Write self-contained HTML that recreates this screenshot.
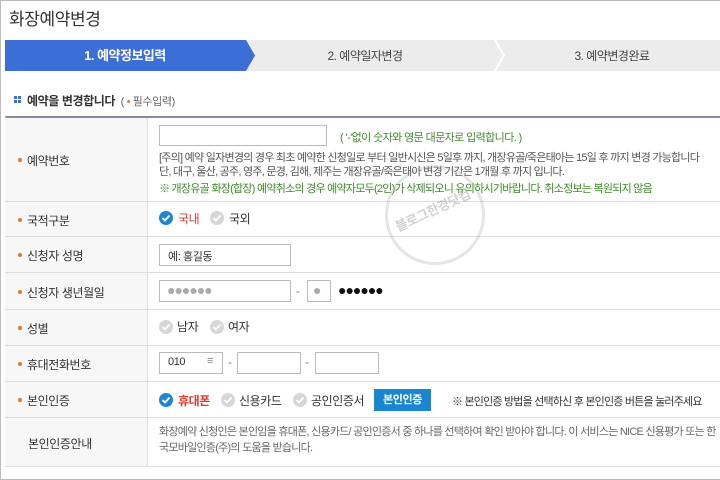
<!DOCTYPE html>
<html><head><meta charset="utf-8"><style>
*{margin:0;padding:0;box-sizing:border-box}
body{width:720px;height:480px;background:#fff;font-family:"Liberation Sans","Noto Sans CJK KR",sans-serif;position:relative;overflow:hidden;color:#333;letter-spacing:-0.4px}
.frame{position:absolute;left:0;top:0;width:720px;height:480px;border:1px solid #bbb;border-right:none}
.abs{position:absolute}
.t{font-size:12px;white-space:nowrap}
.row{position:absolute;left:5px;width:715px;border-bottom:1px solid #ddd}
.lab{position:absolute;left:5px;width:143px;background:#f7f7f7;border-right:1px solid #ddd}
.lab span{position:absolute;left:22px;font-size:12px;color:#333}
.dot{position:absolute;left:13px;width:4px;height:4px;border-radius:2px;background:#e8761f}
.box{position:absolute;border:1px solid #bbb;background:#fff;height:22px}
.chk{position:absolute;width:14px;height:14px;border-radius:7px;background:#d6d6d6}
.chk.on{background:#1f86d6}
.chk svg{position:absolute;left:2px;top:2px}
.clip{position:absolute;left:148px;top:0;width:572px;height:480px;overflow:hidden}
</style></head><body>
<div class="frame"></div>
<div class="abs" style="left:9px;top:5px;font-size:17px;color:#333">화장예약변경</div>
<svg class="abs" style="left:5px;top:40px" width="715" height="31">
<polygon points="0,0 715,0 715,31 0,31" fill="#ececec"/>
<polygon points="0,0 241,0 250,15.5 241,31 0,31" fill="#3b6fd6"/>
<polyline points="490,0 499,15.5 490,31" fill="none" stroke="#fff" stroke-width="2"/>
<text x="120" y="20" font-size="13" fill="#fff" text-anchor="middle" font-weight="bold" letter-spacing="-0.5" font-family="Liberation Sans,Noto Sans CJK KR,sans-serif">1. 예약정보입력</text>
<text x="360" y="20" font-size="12" fill="#444" text-anchor="middle" letter-spacing="-0.5" font-family="Liberation Sans,Noto Sans CJK KR,sans-serif">2. 예약일자변경</text>
<text x="607" y="20" font-size="12" fill="#444" text-anchor="middle" letter-spacing="-0.5" font-family="Liberation Sans,Noto Sans CJK KR,sans-serif">3. 예약변경완료</text>
</svg>
<svg class="abs" style="left:14px;top:96px" width="7" height="7"><rect x="0" y="0" width="3" height="3" fill="#3b6fd6"/><rect x="4" y="0" width="3" height="3" fill="#3b6fd6"/><rect x="0" y="4" width="3" height="3" fill="#3b6fd6"/><rect x="4" y="4" width="3" height="3" fill="#3b6fd6"/></svg>
<div class="abs t" style="left:27px;top:92px;font-weight:bold;color:#333">예약을 변경합니다 <span style="font-weight:normal;font-size:11px;color:#666">&nbsp;( <span style="color:#e8761f">•</span> 필수입력)</span></div>
<div class="abs" style="left:5px;top:116px;width:715px;height:2px;background:#8a8a9a"></div>
<div class="abs" style="left:5px;top:117px;width:1px;height:350px;background:#ddd"></div>

<div class="row" style="top:118px;height:84px"></div><div class="lab" style="top:118px;height:83px"><div class="dot" style="top:40px"></div><span style="top:34px">예약번호</span></div>
<div class="row" style="top:202px;height:35px"></div><div class="lab" style="top:202px;height:34px"><div class="dot" style="top:16px"></div><span style="top:10px">국적구분</span></div>
<div class="row" style="top:237px;height:36px"></div><div class="lab" style="top:237px;height:35px"><div class="dot" style="top:16px"></div><span style="top:10px">신청자 성명</span></div>
<div class="row" style="top:273px;height:37px"></div><div class="lab" style="top:273px;height:36px"><div class="dot" style="top:17px"></div><span style="top:11px">신청자 생년월일</span></div>
<div class="row" style="top:310px;height:36px"></div><div class="lab" style="top:310px;height:35px"><div class="dot" style="top:16px"></div><span style="top:10px">성별</span></div>
<div class="row" style="top:346px;height:36px"></div><div class="lab" style="top:346px;height:35px"><div class="dot" style="top:16px"></div><span style="top:10px">휴대전화번호</span></div>
<div class="row" style="top:382px;height:36px"></div><div class="lab" style="top:382px;height:35px"><div class="dot" style="top:16px"></div><span style="top:10px">본인인증</span></div>
<div class="row" style="top:418px;height:49px"></div><div class="lab" style="top:418px;height:48px"><span style="top:17px;left:23px">본인인증안내</span></div>

<div class="clip"><div style="position:absolute;left:-148px;top:0;width:720px;height:480px">
<div class="box" style="left:159px;top:125px;width:168px;height:21px"></div>
<div class="abs t" style="left:340px;top:129px;font-size:11px;color:#3d8b2a;letter-spacing:-0.6px">( '-'없이 숫자와 영문 대문자로 입력합니다. )</div>
<div class="abs" style="left:159px;top:151px;font-size:11px;line-height:14px;color:#555;white-space:nowrap;letter-spacing:-0.75px">[주의] 예약 일자변경의 경우 최초 예약한 신청일로 부터 일반시신은 5일후 까지, 개장유골/죽은태아는 15일 후 까지 변경 가능합니다<br>단, 대구, 울산, 공주, 영주, 문경, 김해, 제주는 개장유골/죽은태아 변경 기간은 1개월 후 까지 입니다.</div>
<div class="abs t" style="left:159px;top:180px;font-size:11px;color:#3d8b2a;letter-spacing:-0.75px">※ 개장유골 화장(합장) 예약취소의 경우 예약자모두(2인)가 삭제되오니 유의하시기바랍니다. 취소정보는 복원되지 않음</div>

<div class="chk on" style="left:159px;top:211px"><svg width="10" height="10"><path d="M1.5 5 L4 7.5 L8.5 2.5" stroke="#fff" stroke-width="1.8" fill="none"/></svg></div>
<div class="abs t" style="left:178px;top:210px;color:#e23b2e">국내</div>
<div class="chk" style="left:210px;top:211px"><svg width="10" height="10"><path d="M1.5 5 L4 7.5 L8.5 2.5" stroke="#fff" stroke-width="1.8" fill="none"/></svg></div>
<div class="abs t" style="left:229px;top:210px">국외</div>

<div class="box" style="left:159px;top:244px;width:132px"></div>
<div class="abs t" style="left:168px;top:248px;font-size:11px">예: 홍길동</div>

<div class="box" style="left:159px;top:280px;width:132px"></div>
<div class="abs" style="left:167px;top:282px;font-size:14px;color:#aaa;letter-spacing:-1px">●●●●●●</div>
<div class="abs t" style="left:296px;top:284px;color:#777">-</div>
<div class="box" style="left:307px;top:280px;width:24px"></div>
<div class="abs" style="left:313px;top:282px;font-size:14px;color:#aaa">●</div>
<div class="abs" style="left:338px;top:282px;font-size:14px;color:#111;letter-spacing:-1px">●●●●●●</div>

<div class="chk" style="left:159px;top:320px"><svg width="10" height="10"><path d="M1.5 5 L4 7.5 L8.5 2.5" stroke="#fff" stroke-width="1.8" fill="none"/></svg></div>
<div class="abs t" style="left:177px;top:318px">남자</div>
<div class="chk" style="left:210px;top:320px"><svg width="10" height="10"><path d="M1.5 5 L4 7.5 L8.5 2.5" stroke="#fff" stroke-width="1.8" fill="none"/></svg></div>
<div class="abs t" style="left:228px;top:318px">여자</div>

<div class="box" style="left:159px;top:352px;width:64px"></div>
<div class="abs t" style="left:168px;top:356px;font-size:11px">010</div>
<div class="abs t" style="left:207px;top:355px;font-size:11px;color:#888">≡</div>
<div class="abs t" style="left:228px;top:355px;color:#777">-</div>
<div class="box" style="left:237px;top:352px;width:64px"></div>
<div class="abs t" style="left:305px;top:355px;color:#777">-</div>
<div class="box" style="left:315px;top:352px;width:64px"></div>

<div class="chk on" style="left:159px;top:393px"><svg width="10" height="10"><path d="M1.5 5 L4 7.5 L8.5 2.5" stroke="#fff" stroke-width="1.8" fill="none"/></svg></div>
<div class="abs t" style="left:178px;top:392px;color:#e23b2e;font-weight:bold">휴대폰</div>
<div class="chk" style="left:221px;top:393px"><svg width="10" height="10"><path d="M1.5 5 L4 7.5 L8.5 2.5" stroke="#fff" stroke-width="1.8" fill="none"/></svg></div>
<div class="abs t" style="left:239px;top:392px">신용카드</div>
<div class="chk" style="left:293px;top:393px"><svg width="10" height="10"><path d="M1.5 5 L4 7.5 L8.5 2.5" stroke="#fff" stroke-width="1.8" fill="none"/></svg></div>
<div class="abs t" style="left:311px;top:392px">공인인증서</div>
<div class="abs t" style="left:374px;top:389px;width:57px;height:22px;background:#1a86d0;color:#fff;font-weight:bold;font-size:11px;text-align:center;line-height:22px">본인인증</div>
<div class="abs t" style="left:452px;top:393px;font-size:11px;letter-spacing:-0.8px">※ 본인인증 방법을 선택하신 후 본인인증 버튼을 눌러주세요</div>

<div class="abs" style="left:159px;top:424px;font-size:11px;line-height:16px;color:#666;white-space:nowrap;letter-spacing:-0.75px">화장예약 신청인은 본인임을 휴대폰, 신용카드/ 공인인증서 중 하나를 선택하여 확인 받아야 합니다. 이 서비스는 NICE 신용평가 또는 한<br>국모바일인증(주)의 도움을 받습니다.</div>
</div></div>

<div class="abs" style="left:385px;top:165px;width:100px;height:100px;border-radius:50%;border:3px solid rgba(150,150,150,.25)"></div>
<div class="abs t" style="left:392px;top:200px;font-size:13px;color:rgba(150,150,150,.45);font-weight:bold;transform:rotate(-25deg)">블로그한경닷컴</div>
</body></html>
